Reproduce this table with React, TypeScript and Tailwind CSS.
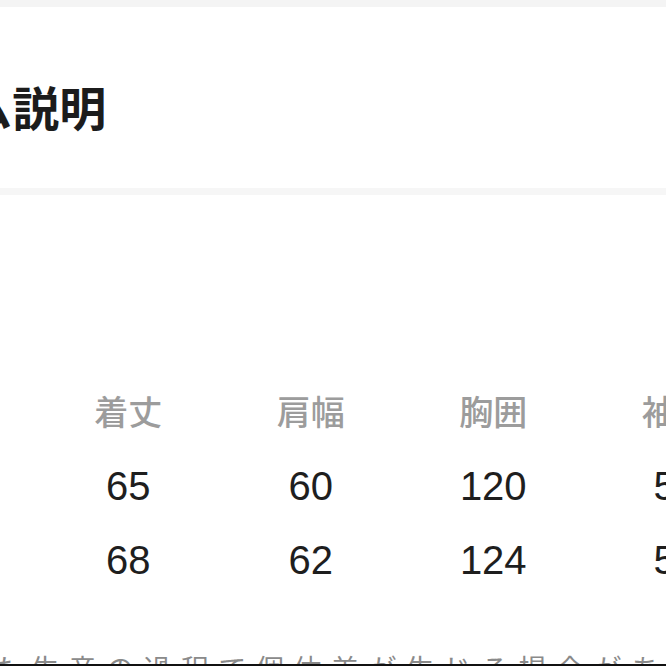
const COLUMNS = ["着丈", "肩幅", "胸囲", "袖丈"];

const ROWS = [
  ["65", "60", "120", "58"],
  ["68", "62", "124", "59"],
];

const jp = "font-['Noto_Sans_CJK_JP',sans-serif]";
const num = "font-['Liberation_Sans','Noto_Sans_CJK_JP',sans-serif]";

export default function App() {
  return (
    <div className="w-[666px] h-[666px] overflow-hidden bg-white flex flex-col">
      {/* top edge */}
      <div className="h-[7px] shrink-0 bg-[#f4f4f4]" />

      {/* Section title */}
      <div className="h-[181px] shrink-0 pt-[75px]">
        <h2
          className={`${jp} ml-[-171px] whitespace-nowrap text-[47px] leading-[47px] font-bold text-[#1c1c1c]`}
        >
          アイテム説明
        </h2>
      </div>

      <div className="h-[7px] shrink-0 bg-[#f6f6f6]" />

      {/* Size table */}
      <div className="pt-[196px] shrink-0">
        <div className="flex ml-[37px]">
          {COLUMNS.map((c) => (
            <div
              key={c}
              className={`${jp} w-[182.5px] shrink-0 text-center text-[34px] leading-[40px] font-medium text-[#9c9c9c]`}
            >
              {c}
            </div>
          ))}
        </div>
        {ROWS.map((row, i) => (
          <div key={i} className={`flex ml-[37px] ${i === 0 ? "mt-[35px]" : "mt-[33px]"}`}>
            {row.map((v, j) => (
              <div
                key={j}
                className={`${num} w-[182.5px] shrink-0 text-center text-[40px] leading-[41px] text-[#1e1e1e]`}
              >
                {v}
              </div>
            ))}
          </div>
        ))}
      </div>

      {/* Note, cut off at the bottom */}
      <div className="flex-1 overflow-hidden flex flex-col justify-end">
        <div className="h-[10px] overflow-hidden">
          <p
            className={`${jp} ml-[-44px] whitespace-nowrap text-[28px] leading-[28px] tracking-[9.5px] text-[#8a8a8a]`}
          >
            また生産の過程で個体差が生じる場合があります。
          </p>
        </div>
      </div>
      <div className="h-[2px] shrink-0 bg-[#111]" />
    </div>
  );
}
